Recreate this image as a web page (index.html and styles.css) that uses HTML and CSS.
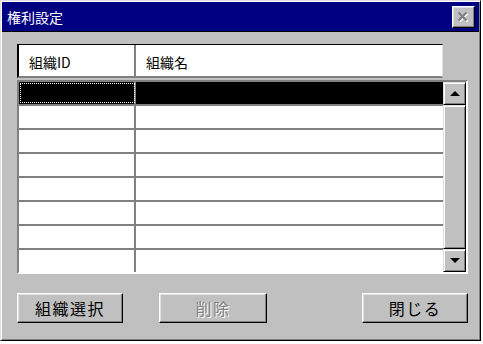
FILE: index.html
```html
<!DOCTYPE html>
<html lang="ja">
<head>
    <meta charset="UTF-8">
    <title>権利設定</title>
    <link rel="stylesheet" href="styles.css">
</head>
<body>
    <div class="window">
        <div class="titlebar">
            <span class="title">権利設定</span>
            <button class="close-btn" disabled>
                <svg width="13" height="12" viewBox="0 0 13 12">
                    <path d="M2.5 2.5 L10.5 10.5 M10.5 2.5 L2.5 10.5" stroke="#fff" stroke-width="2.4" />
                    <path d="M1.5 1.5 L9.5 9.5 M9.5 1.5 L1.5 9.5" stroke="#808080" stroke-width="2.4" />
                </svg>
            </button>
        </div>

        <div class="dialog-body">
            <div class="list-head">
                <div class="head-cell col-id">組織ID</div>
                <div class="head-cell col-name">組織名</div>
            </div>

            <div class="list-grid">
                <div class="rows">
                    <div class="row selected">
                        <div class="cell col-id focus"></div>
                        <div class="cell col-name"></div>
                    </div>
                    <div class="row"><div class="cell col-id"></div><div class="cell col-name"></div></div>
                    <div class="row"><div class="cell col-id"></div><div class="cell col-name"></div></div>
                    <div class="row"><div class="cell col-id"></div><div class="cell col-name"></div></div>
                    <div class="row"><div class="cell col-id"></div><div class="cell col-name"></div></div>
                    <div class="row"><div class="cell col-id"></div><div class="cell col-name"></div></div>
                    <div class="row"><div class="cell col-id"></div><div class="cell col-name"></div></div>
                    <div class="row"><div class="cell col-id"></div><div class="cell col-name"></div></div>
                </div>
                <div class="scrollbar">
                    <div class="scroll-btn"><span class="arrow-up"></span></div>
                    <div class="scroll-thumb"></div>
                    <div class="scroll-btn"><span class="arrow-down"></span></div>
                </div>
            </div>

            <div class="controls">
                <button class="btn">組織選択</button>
                <button class="btn btn-delete" disabled>削除</button>
                <button class="btn btn-close">閉じる</button>
            </div>
        </div>
    </div>
</body>
</html>
```

FILE: styles.css
```css
:root {
    --face: #c0c0c0;
    --shadow: #808080;
    --light: #dfdfdf;
    --title: #000080;
}

* {
    margin: 0;
    padding: 0;
    box-sizing: border-box;
}

body {
    background: #fff;
    font-family: "Noto Sans CJK JP", "Liberation Sans", sans-serif;
    color: #000;
}

.window {
    width: 481px;
    height: 341px;
    background: var(--face);
    border: 1px solid;
    border-color: var(--light) #000 #000 var(--light);
    box-shadow: inset 1px 1px #fff, inset -1px -1px var(--shadow);
    padding: 1px;
}

.titlebar {
    height: 30px;
    background: var(--title);
    border-bottom: 1px solid #000;
    display: flex;
    align-items: center;
    justify-content: space-between;
    padding: 0 4px 0 5px;
}

.title {
    color: #fff;
    font-size: 14px;
    line-height: 1;
}

.close-btn {
    width: 23px;
    height: 22px;
    background: var(--face);
    border: 1px solid;
    border-color: #fff #000 #000 #fff;
    box-shadow: inset -1px -1px var(--shadow), inset 1px 1px var(--light);
    display: flex;
    align-items: center;
    justify-content: center;
}

.dialog-body {
    padding: 12px 10px 0 15px;
}

.list-head {
    width: 426px;
    height: 34px;
    background: #fff;
    border: 1px solid;
    border-color: #000 var(--light) var(--shadow) #000;
    border-bottom-width: 2px;
    border-left-width: 2px;
    display: flex;
}

.head-cell {
    font-size: 14px;
    display: flex;
    align-items: center;
    padding-top: 3px;
}

.list-head .col-id {
    width: 117px;
    padding-left: 10px;
    border-right: 2px solid var(--shadow);
}

.list-head .col-name {
    padding-left: 10px;
}

.list-grid {
    margin-top: 2px;
    width: 451px;
    height: 194px;
    border: 2px solid;
    border-color: var(--shadow) #fff #fff var(--shadow);
    box-shadow: inset 1px 1px #000, inset -1px -1px var(--light);
    display: flex;
}

.rows {
    flex: 1;
    display: flex;
    flex-direction: column;
    background: #fff;
}

.row {
    display: flex;
    height: 24px;
    border-bottom: 2px solid var(--shadow);
}

.row:last-child {
    border-bottom: none;
    height: 22px;
}

.cell {
    height: 100%;
}

.cell.col-id {
    width: 117px;
    border-right: 2px solid var(--shadow);
}

.cell.col-name {
    flex: 1;
}

.row.selected .cell {
    background: #000;
}

.cell.focus {
    outline: 1px dotted #fff;
    outline-offset: -2px;
}

.scrollbar {
    width: 23px;
    display: flex;
    flex-direction: column;
    background: var(--face);
}

.scroll-btn,
.scroll-thumb {
    background: var(--face);
    border: 1px solid;
    border-color: var(--light) #000 #000 var(--light);
    box-shadow: inset 1px 1px #fff, inset -1px -1px var(--shadow);
}

.scroll-btn {
    height: 23px;
    display: flex;
    align-items: center;
    justify-content: center;
}

.scroll-thumb {
    flex: 1;
}

.arrow-up {
    width: 0;
    height: 0;
    border-left: 5px solid transparent;
    border-right: 5px solid transparent;
    border-bottom: 5px solid #000;
}

.arrow-down {
    width: 0;
    height: 0;
    border-left: 5px solid transparent;
    border-right: 5px solid transparent;
    border-top: 5px solid #000;
}

.controls {
    display: flex;
    margin-top: 19px;
    width: 451px;
}

.btn {
    width: 106px;
    height: 30px;
    background: var(--face);
    border: 1px solid;
    border-color: #fff #000 #000 #fff;
    box-shadow: inset -1px -1px var(--shadow), inset 1px 1px var(--light);
    font-family: inherit;
    font-size: 16px;
    letter-spacing: 1.5px;
    color: #000;
}

.btn-delete {
    width: 108px;
    margin-left: 36px;
    color: var(--shadow);
    text-shadow: 1px 1px #fff;
}

.btn-close {
    margin-left: auto;
}
```
